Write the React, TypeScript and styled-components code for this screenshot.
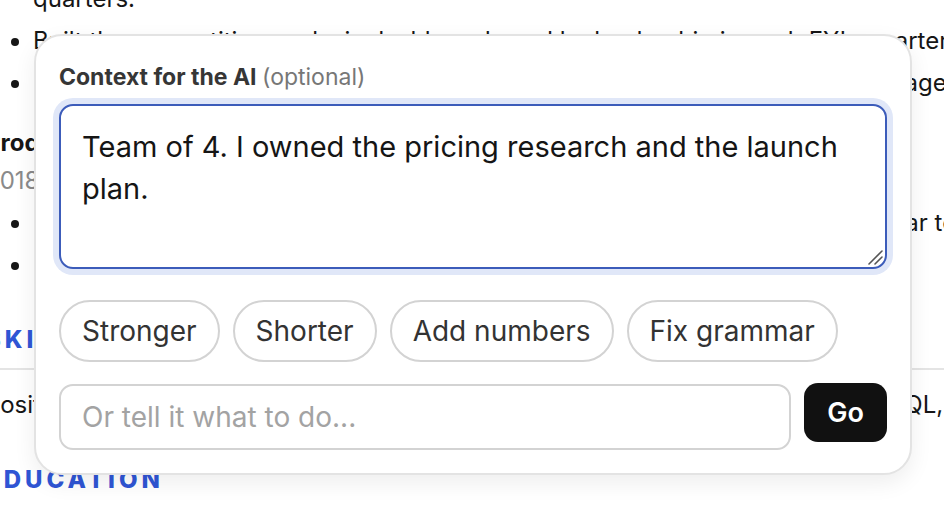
import React from "react";
import styled, { createGlobalStyle } from "styled-components";

const Global = createGlobalStyle`
  html, body { margin: 0; padding: 0; background: #fff; }
  body { overflow: hidden; font-family: Inter, "Noto Sans", sans-serif; }
  * { box-sizing: border-box; }
`;

const Page = styled.div`
  position: relative;
  width: 944px;
  height: 508px;
  overflow: hidden;
  background: #fff;
`;

const Doc = styled.div`
  margin-left: -15px;
  width: 1100px;
  margin-top: -22px;
  font-size: 24px;
  color: #161616;
  line-height: 42px;
`;

const Line = styled.div<{ $indent?: boolean }>`
  padding-left: ${(p) => (p.$indent ? "48px" : "0")};
  white-space: nowrap;
`;

const List = styled.ul<{ $mt?: number }>`
  margin: ${(p) => p.$mt ?? 0}px 0 0;
  padding-left: 48px;
  list-style: disc;
  li { white-space: nowrap; }
`;

const RoleTitle = styled.div`
  margin-top: 18px;
  font-weight: 700;
  white-space: nowrap;
`;

const RoleDate = styled.div`
  color: #8a8a8a;
  line-height: 34px;
  white-space: nowrap;
`;

const SectionHead = styled.div<{ $mt: number }>`
  margin-top: ${(p) => p.$mt}px;
  padding-bottom: 7px;
  border-bottom: 2px solid #e4e4e4;
  color: #2f55d4;
  font-weight: 800;
  letter-spacing: 4px;
  text-transform: uppercase;
  white-space: nowrap;
`;

const Para = styled.div`
  margin-top: 14px;
  white-space: nowrap;
`;

const Popover = styled.div`
  position: absolute;
  left: 34px;
  top: 34px;
  width: 878px;
  background: #fff;
  border: 2px solid #e3e3e3;
  border-radius: 28px;
  padding: 26px 23px 23px;
  box-shadow: 0 8px 22px rgba(0, 0, 0, 0.07);
  font-family: Inter, "Noto Sans", sans-serif;
`;

const Label = styled.div`
  font-size: 23px;
  line-height: 30px;
  font-weight: 700;
  color: #363636;
  margin-bottom: 12px;
  white-space: nowrap;
`;

const Optional = styled.span`
  font-weight: 400;
  color: #777;
`;

const Field = styled.div`
  position: relative;
`;

const Context = styled.textarea`
  display: block;
  width: 100%;
  height: 165px;
  border: 2px solid #3c5cba;
  border-radius: 14px;
  box-shadow: 0 0 0 6px #e0e7f8;
  padding: 20px 23px 20px 21px;
  font-family: Inter, "Noto Sans", sans-serif;
  font-size: 29px;
  line-height: 42px;
  color: #151515;
  outline: none;
  resize: none;
`;

const Grip = styled.svg`
  position: absolute;
  right: 3px;
  bottom: 3px;
  width: 18px;
  height: 18px;
  pointer-events: none;
`;

const Chips = styled.div`
  display: flex;
  gap: 13px;
  margin-top: 31px;
`;

const Chip = styled.button`
  height: 62px;
  padding: 0 21px;
  border: 2px solid #d3d3d3;
  border-radius: 999px;
  background: #fff;
  color: #333;
  font-family: Inter, "Noto Sans", sans-serif;
  font-size: 28px;
  cursor: pointer;
  white-space: nowrap;
`;

const Row = styled.div`
  display: flex;
  align-items: flex-start;
  gap: 13px;
  margin-top: 22px;
`;

const Ask = styled.input`
  flex: 1;
  min-width: 0;
  height: 66px;
  border: 2px solid #d3d3d3;
  border-radius: 14px;
  padding: 0 21px;
  font-family: Inter, "Noto Sans", sans-serif;
  font-size: 28px;
  color: #151515;
  outline: none;
  &::placeholder { color: #a3a3a3; }
`;

const Go = styled.button`
  width: 83px;
  height: 59px;
  margin-top: -1px;
  border: none;
  border-radius: 14px;
  background: #111;
  color: #fff;
  font-family: Inter, "Noto Sans", sans-serif;
  font-size: 27px;
  font-weight: 600;
  cursor: pointer;
`;

const chips = ["Stronger", "Shorter", "Add numbers", "Fix grammar"];

export default function App() {
  return (
    <Page>
      <Global />
      <Doc>
        <Line $indent>quarters.</Line>
        <List>
          <li>Built the competitive analysis dashboard used by leadership in each FY's quarterly review</li>
          <li>Partnered with sales and design on onboarding, cutting time to value for managers</li>
        </List>
        <RoleTitle>Product Manager, Growth</RoleTitle>
        <RoleDate>2018 – 2020</RoleDate>
        <List $mt={4}>
          <li>Led experiments across sign-up and activation, lifting conversion over the year to date</li>
          <li>Ran weekly user interviews and synthesized findings for the roadmap</li>
        </List>
        <SectionHead $mt={33}>Skills</SectionHead>
        <Para>Positioning, pricing, roadmapping, user research, OKR, A/B/n testing, analytics, SQL, Figma</Para>
        <SectionHead $mt={33}>Education</SectionHead>
      </Doc>
      <Popover>
        <Label>
          Context for the AI <Optional>(optional)</Optional>
        </Label>
        <Field>
          <Context defaultValue="Team of 4. I owned the pricing research and the launch plan." />
          <Grip viewBox="0 0 18 18">
            <path d="M16 3 L3 16 M16 9 L9 16" stroke="#555" strokeWidth="1.6" strokeLinecap="round" fill="none" />
          </Grip>
        </Field>
        <Chips>
          {chips.map((c) => (
            <Chip key={c}>{c}</Chip>
          ))}
        </Chips>
        <Row>
          <Ask placeholder="Or tell it what to do..." />
          <Go>Go</Go>
        </Row>
      </Popover>
    </Page>
  );
}
